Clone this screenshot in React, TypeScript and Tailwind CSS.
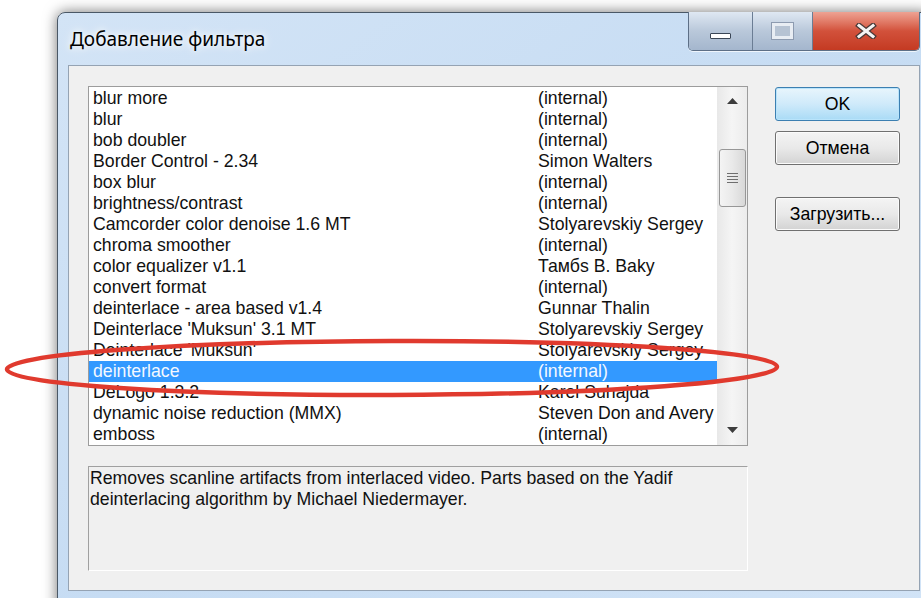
const filters: [string, string][] = [
  ["blur more", "(internal)"],
  ["blur", "(internal)"],
  ["bob doubler", "(internal)"],
  ["Border Control - 2.34", "Simon Walters"],
  ["box blur", "(internal)"],
  ["brightness/contrast", "(internal)"],
  ["Camcorder color denoise 1.6 MT", "Stolyarevskiy Sergey"],
  ["chroma smoother", "(internal)"],
  ["color equalizer v1.1", "Тамбs В. Baky"],
  ["convert format", "(internal)"],
  ["deinterlace - area based v1.4", "Gunnar Thalin"],
  ["Deinterlace 'Muksun' 3.1 MT", "Stolyarevskiy Sergey"],
  ["Deinterlace 'Muksun'", "Stolyarevskiy Sergey"],
  ["deinterlace", "(internal)"],
  ["DeLogo 1.3.2", "Karel Suhajda"],
  ["dynamic noise reduction (MMX)", "Steven Don and Avery"],
  ["emboss", "(internal)"],
];

const selected = 13;

function Arrow({ up }: { up?: boolean }) {
  return (
    <svg width="11" height="6" viewBox="0 0 11 6">
      <path d={up ? "M0 6 L5.5 0 L11 6 Z" : "M0 0 L5.5 6 L11 0 Z"} fill="#3d3d3d" />
    </svg>
  );
}

function WinButton({ label, primary }: { label: string; primary?: boolean }) {
  return (
    <button
      className={
        primary
          ? "h-[34px] w-[125px] rounded-[3px] border border-[#3c7fb1] bg-gradient-to-b from-[#e8f5fc] via-[#cfeafa] to-[#a9dbf6] shadow-[inset_0_0_0_1px_#b9e4fb] text-black"
          : "h-[34px] w-[125px] rounded-[3px] border border-[#707070] bg-gradient-to-b from-[#f4f4f4] via-[#e9e9e9] to-[#d3d3d3] shadow-[inset_0_0_0_1px_#fbfbfb] text-black"
      }
    >
      {label}
    </button>
  );
}

export default function App() {
  return (
    <div className="relative w-[921px] h-[598px] overflow-hidden bg-white pl-[57px] pt-[12px] font-['Liberation_Sans',Arial,sans-serif] text-[17.7px] text-[#111]">
      {/* window frame */}
      <div className="relative w-[874px] h-[620px] rounded-t-[8px] border border-[#4a5866] bg-gradient-to-br from-[#d3e4f6] via-[#c6dcf3] to-[#d2e4f7] shadow-[0_0_14px_rgba(0,0,0,0.55)]">
        <div className="flex h-[52px] items-center pl-[12px]">
          <span className="font-['Noto_Sans','Open_Sans',sans-serif] text-[19px] text-black [text-shadow:0_0_12px_#ffffff,0_0_6px_#ffffff]">
            Добавление фильтра
          </span>
        </div>

        {/* caption buttons */}
        <div className="absolute left-[630px] top-[-1px] flex h-[39px] overflow-hidden rounded-b-[5px] border border-t-0 border-[#5d6f86] shadow-[0_1px_0_rgba(255,255,255,0.7)]">
          <div className="flex w-[64px] items-end justify-center border-r border-[#6b7d94] bg-gradient-to-b from-[#dfe8f3] via-[#b9c8da] to-[#a4b6cd] pb-[11px]">
            <div className="h-[6px] w-[21px] rounded-[1px] border border-[#3a4656] bg-white" />
          </div>
          <div className="flex w-[60px] items-center justify-center border-r border-[#6b7d94] bg-gradient-to-b from-[#dfe8f3] via-[#b9c8da] to-[#a4b6cd]">
            <div className="h-[16px] w-[21px] border-[3px] border-[#e8edf3] bg-[#b6c3d3] shadow-[0_0_0_1px_#8d9bb0]" />
          </div>
          <div className="flex w-[106px] items-center justify-center bg-gradient-to-b from-[#eea293] via-[#d2513b] to-[#c43a22]">
            <svg width="22" height="16" viewBox="0 0 22 16">
              <path d="M4 2.5 L18 13.5 M18 2.5 L4 13.5" stroke="#4a3a38" strokeWidth="5.5" strokeLinecap="square" />
              <path d="M4 2.5 L18 13.5 M18 2.5 L4 13.5" stroke="#f4f4f4" strokeWidth="3" strokeLinecap="square" />
            </svg>
          </div>
        </div>

        {/* client area */}
        <div className="ml-[10px] h-[526px] w-[852px] border border-[#95a3b3] bg-[#f0f0f0] pl-[19px] pt-[20px]">
          <div className="flex gap-[27px]">
            <div className="flex w-[660px] flex-col gap-[20px]">
              {/* filter list */}
              <div className="flex h-[360px] border border-[#9c9c9c] bg-white">
                <div className="flex-1 overflow-hidden pt-[1px]">
                  {filters.map(([name, author], i) => (
                    <div
                      key={name + i}
                      className={
                        i === selected
                          ? "flex h-[21px] items-center whitespace-nowrap bg-[#3399ff] text-[#f4f8ff]"
                          : "flex h-[21px] items-center whitespace-nowrap"
                      }
                    >
                      <span className="w-[449px] shrink-0 pl-[4px]">{name}</span>
                      <span>{author}</span>
                    </div>
                  ))}
                </div>
                {/* vertical scrollbar */}
                <div className="flex w-[30px] flex-col items-center bg-gradient-to-r from-[#e8e8e8] via-[#f5f5f5] to-[#ececec]">
                  <div className="flex h-[28px] items-center justify-center">
                    <Arrow up />
                  </div>
                  <div className="mt-[34px] flex h-[58px] w-[27px] items-center justify-center rounded-[3px] border border-[#979797] bg-gradient-to-r from-[#f4f4f4] via-[#e9e9e9] to-[#d8d8d8]">
                    <div className="flex flex-col gap-[2px]">
                      <div className="h-px w-[11px] bg-[#6e6e6e]" />
                      <div className="h-px w-[11px] bg-[#6e6e6e]" />
                      <div className="h-px w-[11px] bg-[#6e6e6e]" />
                      <div className="h-px w-[11px] bg-[#6e6e6e]" />
                    </div>
                  </div>
                  <div className="flex-1" />
                  <div className="flex h-[30px] items-center justify-center">
                    <Arrow />
                  </div>
                </div>
              </div>

              {/* description */}
              <div className="h-[105px] border border-[#a0a0a0] border-b-white border-r-white pl-[1px] pt-[1px] leading-[21px]">
                Removes scanline artifacts from interlaced video. Parts based on the Yadif deinterlacing algorithm by Michael
                Niedermayer.
              </div>
            </div>

            <div className="mt-[1px] flex flex-col">
              <WinButton label="OK" primary />
              <div className="mt-[10px]">
                <WinButton label="Отмена" />
              </div>
              <div className="mt-[32px]">
                <WinButton label="Загрузить..." />
              </div>
            </div>
          </div>
        </div>
      </div>

      {/* red marker around the selected row */}
      <svg className="absolute left-0 top-[330px]" width="800" height="80" viewBox="0 0 800 80">
        <ellipse cx="392" cy="38" rx="385" ry="27" fill="none" stroke="#e03a2e" strokeWidth="4.5" transform="rotate(-0.2 392 38)" />
      </svg>
    </div>
  );
}
